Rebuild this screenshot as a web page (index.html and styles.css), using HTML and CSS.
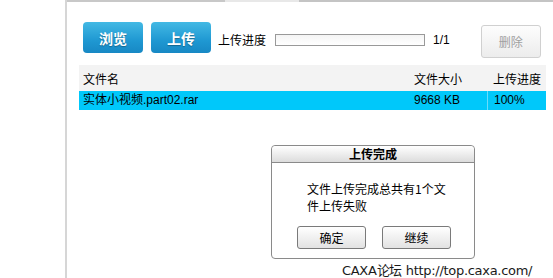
FILE: index.html
```html
<!DOCTYPE html>
<html lang="zh-CN">
<head>
    <meta charset="UTF-8">
    <title>上传</title>
    <link rel="stylesheet" href="styles.css">
</head>
<body>
    <div class="page">
        <div class="panel">
            <!-- Werkzeugleiste -->
            <div class="toolbar">
                <button class="btn-blue">浏览</button>
                <button class="btn-blue">上传</button>
                <span class="label">上传进度</span>
                <div class="progress"></div>
                <span class="count">1/1</span>
                <button class="btn-delete">删除</button>
            </div>

            <!-- Dateiliste -->
            <div class="filelist">
                <div class="row head">
                    <div class="col name">文件名</div>
                    <div class="col size">文件大小</div>
                    <div class="col prog">上传进度</div>
                </div>
                <div class="row selected">
                    <div class="col name">实体小视频.part02.rar</div>
                    <div class="col size">9668 KB</div>
                    <div class="col prog">100%</div>
                </div>
            </div>

            <!-- Dialog -->
            <div class="dialog">
                <div class="dialog-title">上传完成</div>
                <div class="dialog-msg">文件上传完成总共有1个文件上传失败</div>
                <div class="dialog-buttons">
                    <button class="btn-dlg">确定</button>
                    <button class="btn-dlg">继续</button>
                </div>
            </div>
        </div>
    </div>
    <div class="watermark">CAXA论坛 http://top.caxa.com/</div>
</body>
</html>
```

FILE: styles.css
```css
/* Seite */
body {
    margin: 0;
    background-color: white;
    font-family: "Noto Sans CJK SC", "Liberation Sans", sans-serif;
    font-size: 12px;
    color: #000;
    overflow: hidden;
}

.page {
    padding-left: 65px;
    height: 278px;
}

.panel {
    position: relative;
    height: 100%;
    border-left: 2px solid #d6d6d6;
    background: linear-gradient(to right, #c8c8c8 0, #c8c8c8 158px, #e8e8e8 158px, #e8e8e8 232px, #c4c4c4 232px) top left / 100% 2px no-repeat;
}

/* Werkzeugleiste */
.toolbar {
    display: flex;
    align-items: flex-start;
    padding: 22px 0 0 16px;
    height: 65px;
    box-sizing: border-box;
}

button {
    font-family: "Noto Sans CJK SC", sans-serif;
    cursor: pointer;
    padding: 0;
}

.btn-blue {
    width: 60px;
    height: 31px;
    margin-right: 8px;
    border: none;
    border-radius: 4px;
    background: linear-gradient(to bottom, #43b9e4, #1f98d2 60%, #1788c4);
    color: white;
    font-size: 14px;
    font-weight: bold;
    text-shadow: 0 1px 1px rgba(0, 0, 0, 0.3);
}

.label {
    margin: 10px 9px 0 -1px;
    line-height: 16px;
}

.progress {
    width: 148px;
    height: 10px;
    margin-top: 12px;
    border: 1px solid #999;
    background: linear-gradient(to bottom, #f4f4f4, #fff);
}

.count {
    margin: 10px 0 0 8px;
    line-height: 16px;
    font-family: "Liberation Sans", sans-serif;
}

.btn-delete {
    width: 60px;
    height: 33px;
    margin: 3px 0 0 31px;
    border: 1px solid #d0d0d0;
    border-radius: 3px;
    background: linear-gradient(to bottom, #fdfdfd, #ececec);
    color: #a0a0a0;
    font-size: 12px;
}

/* Dateiliste */
.filelist {
    margin: 0 0 0 12px;
    width: 467px;
}

.row {
    display: flex;
}

.row.head {
    height: 26px;
    line-height: 28px;
    background-color: #f3f3f3;
}

.row.selected {
    height: 19px;
    line-height: 19px;
    background-color: #00c8fa;
    font-family: "Liberation Sans", "Noto Sans CJK SC", sans-serif;
}

.col {
    padding-left: 4px;
    box-sizing: border-box;
    white-space: nowrap;
}

.col.name {
    width: 331px;
}

.col.size {
    width: 77px;
}

.col.prog {
    width: 59px;
    padding-left: 6px;
}

.row.selected .col.prog {
    border-left: 1px solid #6bdcfb;
}

/* Dialog */
.dialog {
    position: absolute;
    left: 204px;
    top: 145px;
    width: 202px;
    height: 112px;
    border: 1px solid #8a8a8a;
    border-radius: 4px;
    background-color: white;
}

.dialog-title {
    height: 16px;
    line-height: 16px;
    text-align: center;
    font-weight: bold;
    border-bottom: 1px solid #8a8a8a;
    border-radius: 4px 4px 0 0;
    background: linear-gradient(to bottom, #ffffff, #dcdcdc);
}

.dialog-msg {
    width: 150px;
    margin: 17px 0 0 35px;
    line-height: 17px;
    height: 46px;
}

.dialog-buttons {
    display: flex;
    gap: 16px;
    padding-left: 25px;
}

.btn-dlg {
    width: 69px;
    height: 23px;
    border: 1px solid #7a7a7a;
    border-radius: 3px;
    background: linear-gradient(to bottom, #ffffff, #e2e2e2);
    font-size: 12px;
    color: #000;
}

/* Wasserzeichen */
.watermark {
    position: absolute;
    left: 342px;
    top: 260px;
    font-family: "DejaVu Sans", sans-serif;
    font-size: 13px;
    color: #1a1a1a;
    text-shadow: 0 0 2px white;
    letter-spacing: -0.3px;
}
```
